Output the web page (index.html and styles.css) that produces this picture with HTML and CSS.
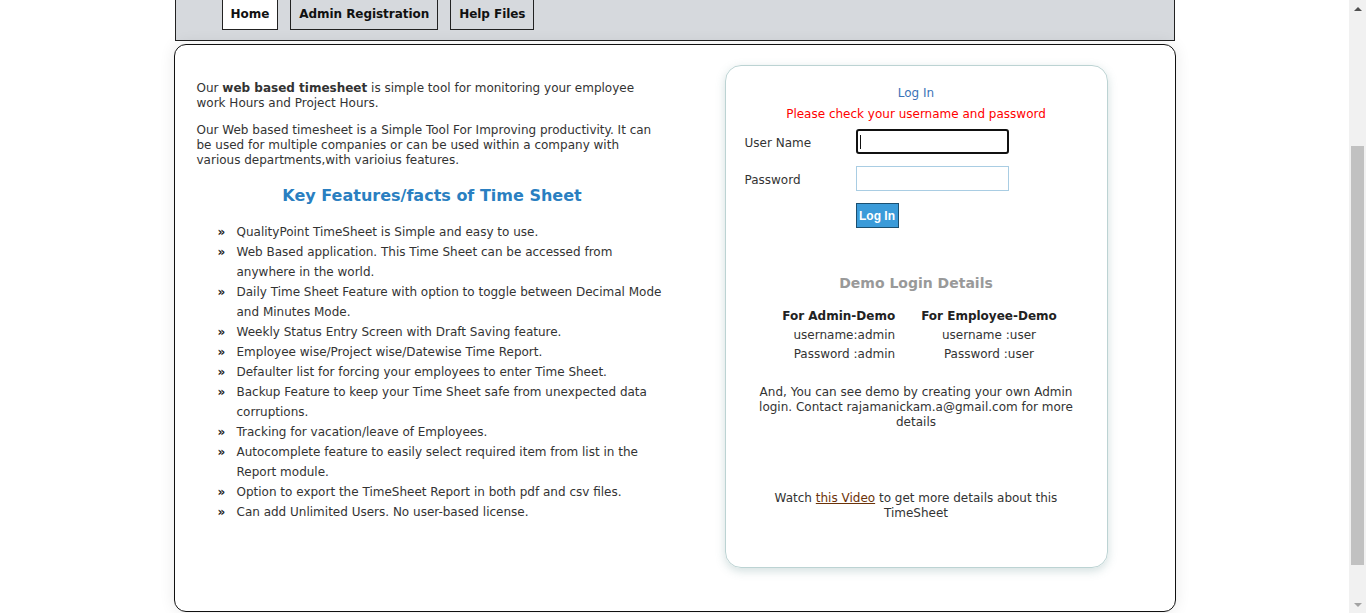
FILE: index.html
```html
<!DOCTYPE html>
<html lang="en">
<head>
<meta charset="utf-8">
<title>QualityPoint TimeSheet - Log In</title>
<link rel="stylesheet" href="styles.css">
</head>
<body>
<div class="page">
  <nav class="topnav">
    <a class="tab active" href="#">Home</a>
    <a class="tab" href="#">Admin Registration</a>
    <a class="tab" href="#">Help Files</a>
  </nav>
  <div class="main">
    <div class="intro">
      <p>Our <b>web based timesheet</b> is simple tool for monitoring your employee work Hours and Project Hours.</p>
      <p>Our Web based timesheet is a Simple Tool For Improving productivity. It can be used for multiple companies or can be used within a company with various departments,with varioius features.</p>
      <h2 class="features-title">Key Features/facts of Time Sheet</h2>
      <ul class="features">
        <li>QualityPoint TimeSheet is Simple and easy to use.</li>
        <li>Web Based application. This Time Sheet can be accessed from anywhere in the world.</li>
        <li>Daily Time Sheet Feature with option to toggle between Decimal Mode and Minutes Mode.</li>
        <li>Weekly Status Entry Screen with Draft Saving feature.</li>
        <li>Employee wise/Project wise/Datewise Time Report.</li>
        <li>Defaulter list for forcing your employees to enter Time Sheet.</li>
        <li>Backup Feature to keep your Time Sheet safe from unexpected data corruptions.</li>
        <li>Tracking for vacation/leave of Employees.</li>
        <li>Autocomplete feature to easily select required item from list in the Report module.</li>
        <li>Option to export the TimeSheet Report in both pdf and csv files.</li>
        <li>Can add Unlimited Users. No user-based license.</li>
      </ul>
    </div>
    <div class="login-box">
      <div class="login-title">Log In</div>
      <div class="login-error">Please check your username and password</div>
      <form class="login-form">
        <label class="login-label" for="user">User Name</label>
        <input class="login-input focused" id="user" type="text">
        <label class="login-label" for="pass">Password</label>
        <input class="login-input" id="pass" type="password">
        <span></span>
        <button class="login-btn" type="button">Log In</button>
      </form>
      <div class="demo-title">Demo Login Details</div>
      <div class="demo-grid">
        <div class="demo-head col1">For Admin-Demo</div>
        <div class="demo-head col2">For Employee-Demo</div>
        <div class="col1">username:admin</div>
        <div class="col2">username :user</div>
        <div class="col1">Password :admin</div>
        <div class="col2">Password :user</div>
      </div>
      <p class="demo-note">And, You can see demo by creating your own Admin login. Contact rajamanickam.a@gmail.com for more details</p>
      <p class="video-note">Watch <a href="#">this Video</a> to get more details about this TimeSheet</p>
    </div>
  </div>
</div>
<div class="scrollbar">
  <div class="sb-up"></div>
  <div class="sb-track"><div class="sb-thumb"></div></div>
  <div class="sb-down"></div>
</div>
</body>
</html>
```
FILE: styles.css
```css
html, body {
  margin: 0;
  padding: 0;
  background: #fff;
  overflow: hidden;
}
body {
  font-family: "DejaVu Sans", Verdana, sans-serif;
  font-size: 12px;
  color: #333;
}
.page {
  width: 1349px;
  height: 613px;
}
.topnav {
  box-sizing: border-box;
  width: 1000px;
  height: 41px;
  margin: 0 auto;
  background: #d6d9dd;
  border: 1px solid #222;
  border-top: none;
  display: flex;
  align-items: flex-end;
  gap: 12px;
  padding: 0 0 10px 46px;
}
.tab {
  flex: none;
  display: block;
  padding: 8px 8px 7px;
  line-height: 16px;
  border: 1px solid #222;
  background: #d6d9dd;
  color: #111;
  font-weight: bold;
  font-size: 12px;
  letter-spacing: -0.05px;
  text-decoration: none;
}
.tab.active {
  background: #fff;
}
.main {
  box-sizing: border-box;
  width: 1002px;
  height: 568px;
  margin: 3px auto 0;
  border: 1px solid #111;
  border-radius: 12px;
  box-shadow: 0 0 16px rgba(0, 0, 0, 0.09);
  display: flex;
  align-items: flex-start;
  padding: 20px 0 0 22px;
  gap: 57px;
}
.intro {
  width: 471px;
  padding-top: 16px;
  line-height: 15px;
}
.intro p {
  width: 466px;
  margin: 0 0 12px;
}
.features-title {
  margin: 18px 0 17px;
  font-size: 16px;
  line-height: 19px;
  color: #2a7fc1;
  text-align: center;
}
.features {
  list-style: none;
  margin: 0;
  padding: 0 0 0 40px;
  line-height: 20px;
}
.features li {
  position: relative;
}
.features li::before {
  content: "\00BB";
  position: absolute;
  left: -19px;
  top: 0;
  color: #222;
  font-weight: bold;
}
.login-box {
  box-sizing: border-box;
  width: 383px;
  height: 503px;
  border: 1px solid #bcd3d3;
  border-radius: 16px;
  box-shadow: 0 3px 10px rgba(95, 140, 140, 0.28);
  padding: 20px 0 0;
  text-align: center;
}
.login-title {
  line-height: 15px;
  color: #3a73b8;
  margin-bottom: 6px;
}
.login-error {
  line-height: 15px;
  color: #f00;
  margin-bottom: 7px;
}
.login-form {
  display: grid;
  grid-template-columns: 111px 153px;
  grid-auto-rows: 25px;
  row-gap: 12px;
  align-items: center;
  padding-left: 19px;
  text-align: left;
  margin: 0;
}
.login-label {
  line-height: 15px;
  padding-top: 3px;
}
.login-input {
  box-sizing: border-box;
  width: 153px;
  height: 25px;
  margin: 0;
  border: 1px solid #a9cde3;
  padding: 0 3px;
  font: inherit;
  background: #fff;
  outline: none;
}
.login-input.focused {
  border: 2px solid #111;
  border-radius: 3px;
  background-image: linear-gradient(#111, #111);
  background-size: 1px 14px;
  background-position: 2px 4px;
  background-repeat: no-repeat;
}
.login-btn {
  justify-self: start;
  box-sizing: border-box;
  width: 43px;
  height: 25px;
  margin: 0;
  padding: 0;
  border: 1px solid #1b4f70;
  background: #3b9bd9;
  color: #fff;
  font-family: "Liberation Sans", Arial, sans-serif;
  font-weight: bold;
  font-size: 12px;
}
.demo-title {
  margin-top: 47px;
  font-size: 14px;
  font-weight: bold;
  line-height: 17px;
  color: #999;
}
.demo-grid {
  display: grid;
  grid-template-columns: auto auto;
  justify-content: center;
  column-gap: 26px;
  grid-auto-rows: 19px;
  align-items: center;
  margin-top: 14px;
  padding-left: 7px;
}
.demo-head {
  font-weight: bold;
  font-size: 12px;
  color: #222;
}
.col1 { text-align: right; }
.col2 { text-align: center; }
.demo-note {
  width: 322px;
  margin: 22px auto 0;
  line-height: 15px;
}
.video-note {
  width: 322px;
  margin: 61px auto 0;
  line-height: 15px;
}
.video-note a {
  color: #6b3208;
  text-decoration: underline;
}
.scrollbar {
  position: fixed;
  top: 0;
  right: 0;
  width: 17px;
  height: 613px;
  background: #f1f1f1;
  display: flex;
  flex-direction: column;
}
.sb-up, .sb-down {
  height: 17px;
  display: flex;
  align-items: center;
  justify-content: center;
}
.sb-up::after {
  content: "";
  border-left: 4px solid transparent;
  border-right: 4px solid transparent;
  border-bottom: 4px solid #505050;
}
.sb-down::after {
  content: "";
  border-left: 4px solid transparent;
  border-right: 4px solid transparent;
  border-top: 4px solid #a3a3a3;
}
.sb-track {
  flex: 1;
  padding: 129px 2px 0;
}
.sb-thumb {
  height: 419px;
  background: #c1c1c1;
}
```
